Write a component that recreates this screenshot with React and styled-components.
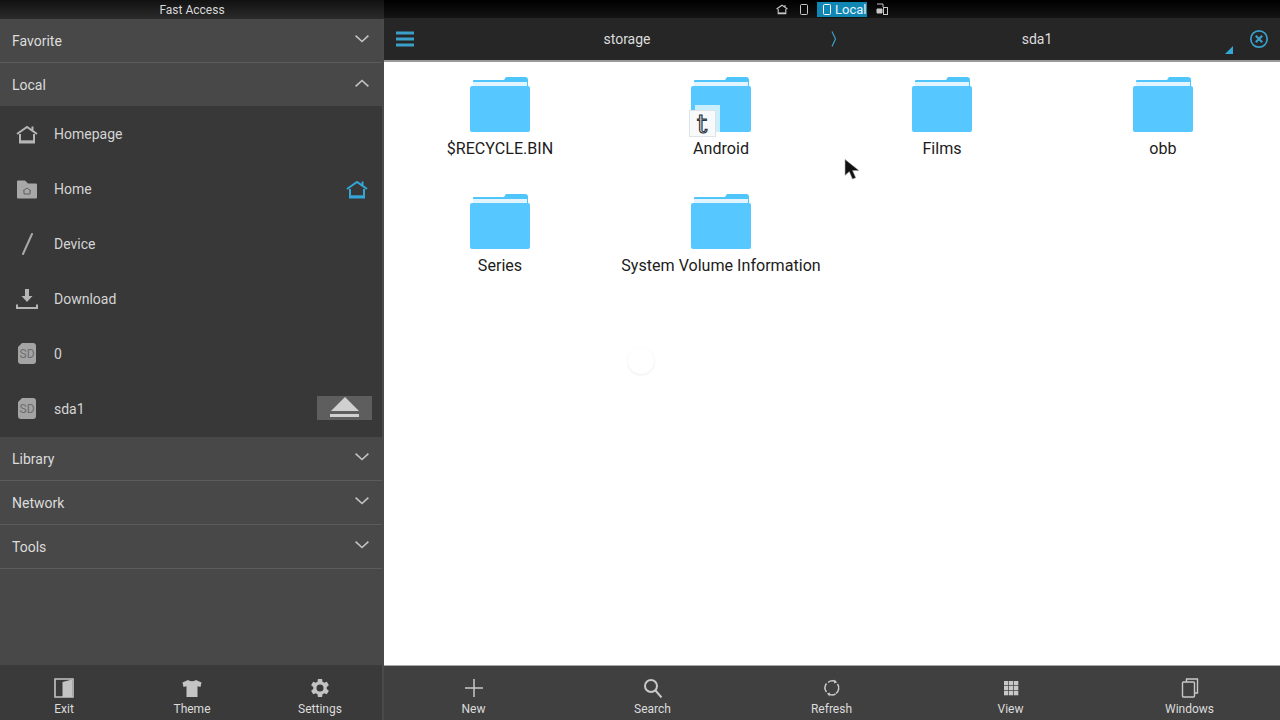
import React from 'react';
import styled, { createGlobalStyle } from 'styled-components';

const GlobalStyle = createGlobalStyle`
  html, body {
    margin: 0;
    padding: 0;
    background: #fff;
  }
  #root {
    width: 1280px;
    height: 720px;
    overflow: hidden;
  }
  * {
    box-sizing: border-box;
  }
`;

const HomeGlyph = ({ size = 22, color = '#b5b5b5' }) => (
  <svg width={size} height={size} viewBox="0 0 22 22" fill="none" stroke={color} strokeWidth="2">
    <path d="M1 11 11 4l5.500 3.800V3.500M21 11l-4.500-3.200" />
    <path d="M4 11v8.500h14V11" />
    <path d="M4 18.500h14" strokeWidth="2.400" />
  </svg>
);

const FolderHomeIcon = () => (
  <svg width="22" height="22" viewBox="0 0 22 22">
    <path d="M1 3.500q0-1 1-1h7l3 3h8q1 0 1 1v13q0 1-1 1H2q-1 0-1-1z" fill="#a8a8a8" />
    <path d="M7 13l4-3 4 3M8 12.500V16h6v-3.500" fill="none" stroke="#5f5f5f" strokeWidth="1" />
  </svg>
);

const SlashIcon = () => (
  <svg width="22" height="22" viewBox="0 0 22 22">
    <path d="M16 1 7 21" stroke="#a8a8a8" strokeWidth="2" strokeLinecap="round" />
  </svg>
);

const DownloadIcon = () => (
  <svg width="22" height="22" viewBox="0 0 22 22" fill="none">
    <path d="M9 1h4v7h3.500L11 14 5.500 8H9z" fill="#b5b5b5" />
    <path d="M1 16.500V20h20v-3.500" stroke="#b5b5b5" strokeWidth="2" />
  </svg>
);

const SdIcon = () => (
  <SdCard><span>SD</span></SdCard>
);

const ExitIcon = () => (
  <svg width="20" height="20" viewBox="0 0 20 20">
    <path d="M1 1h18v18H1z" fill="none" stroke="#c4c4c4" strokeWidth="1.600" />
    <path d="M8.500 4 18 1.500V19H8.500z" fill="#c4c4c4" />
  </svg>
);

const ShirtIcon = () => (
  <svg width="20" height="20" viewBox="0 0 20 20">
    <path d="M6 2q4 2.500 8 0l5.500 2.500-1 4.500-3-.7V19h-11V8.300l-3 .7-1-4.500z" fill="#c4c4c4" />
  </svg>
);

const GearIcon = () => (
  <svg width="20" height="20" viewBox="2.700 2 20 20">
    <path
      fillRule="evenodd"
      fill="#c4c4c4"
      d="M19.400 13a7.600 7.600 0 0 0 0-2l2.200-1.700-2.100-3.600-2.600 1a7.500 7.500 0 0 0-1.700-1L14.800 3h-4.200l-.4 2.700a7.500 7.500 0 0 0-1.700 1l-2.600-1-2.100 3.600L6 11a7.600 7.600 0 0 0 0 2l-2.200 1.700 2.100 3.600 2.600-1a7.500 7.500 0 0 0 1.700 1l.4 2.700h4.200l.4-2.700a7.500 7.500 0 0 0 1.700-1l2.600 1 2.100-3.600zM12.700 15.500a3.500 3.500 0 1 1 0-7 3.500 3.500 0 0 1 0 7z"
    />
  </svg>
);

const PlusIcon = () => (
  <svg width="20" height="20" viewBox="0 0 20 20">
    <path d="M10 1v18M1 10h18" stroke="#c8c8c8" strokeWidth="1.500" />
  </svg>
);

const SearchIcon = () => (
  <svg width="20" height="20" viewBox="0 0 20 20" fill="none" stroke="#c8c8c8" strokeWidth="2">
    <circle cx="8" cy="8" r="6" />
    <path d="m12.500 12.500 6 7" />
  </svg>
);

const RefreshIcon = () => (
  <svg width="20" height="20" viewBox="0 0 20 20" fill="none" stroke="#c8c8c8" strokeWidth="1.500">
    <path d="M6 4.500a7 7 0 0 1 8-.5M15.500 6a7 7 0 0 1-1.500 9.500M13.500 16a7 7 0 0 1-7.500-.5M4.500 14a7 7 0 0 1 0-8.500" />
    <path d="M12.500 1.500 15 4.500l-3 1M7.500 18.500 5 15.500l3-1" fill="#c8c8c8" stroke="none" />
  </svg>
);

const GridIcon = () => (
  <svg width="20" height="20" viewBox="0 0 20 20" fill="#c8c8c8">
    {[2, 7, 12].map((x) =>
      [2, 7, 12].map((y) => <rect key={`${x}-${y}`} x={x + 1} y={y + 1} width="4.300" height="4.300" />)
    )}
  </svg>
);

const WindowsIcon = () => (
  <svg width="20" height="20" viewBox="0 0 20 20" fill="none" stroke="#c8c8c8" strokeWidth="1.400">
    <path d="M6.500 4V1h11v14h-3" />
    <rect x="2.500" y="4" width="12" height="15" rx="1" />
  </svg>
);

const FolderIcon = () => (
  <svg width="60" height="55" viewBox="0 0 60 55">
    <path d="M3 9V4q0-1 1-1h30l2-3h19q3 0 3 3v6z" fill="#4fc6fb" />
    <path d="M3 5h54v4H3z" fill="#e2f5fe" />
    <path d="M0 11q0-2 2-2h56q2 0 2 2v42q0 2-2 2H2q-2 0-2-2z" fill="#56c8ff" />
  </svg>
);

const MenuIcon = () => (
  <svg width="18" height="16" viewBox="0 0 18 16" fill="#3a9fc9">
    <rect y="0.500" width="18" height="3" />
    <rect y="6.500" width="18" height="3" />
    <rect y="12.500" width="18" height="3" />
  </svg>
);

const CloseIcon = () => (
  <svg width="20" height="20" viewBox="0 0 20 20" fill="none" stroke="#3a9fc9">
    <circle cx="10" cy="10" r="8.200" strokeWidth="1.700" />
    <path d="m6.800 6.800 6.400 6.400m0-6.400-6.400 6.400" strokeWidth="2.200" />
  </svg>
);

const Chevron = ({ up }) => (
  <svg width="14" height="8" viewBox="0 0 14 8" fill="none" stroke="#c4c4c4" strokeWidth="1.600">
    <path d={up ? 'M.6 7.400 7 1.500l6.400 5.900' : 'M.6.6 7 6.500 13.400.6'} />
  </svg>
);

const Cursor = () => (
  <svg width="17" height="24" viewBox="0 0 16 22">
    <path d="M1 1v15l4-3.500 3 7 3-1.300-3-6.700h6z" fill="#111" stroke="#999" strokeWidth="0.500" />
  </svg>
);

const favoritesTop = [{ label: 'Favorite' }, { label: 'Local', open: true }];
const favoritesBottom = [{ label: 'Library' }, { label: 'Network' }, { label: 'Tools' }];

const localItems = [
  { label: 'Homepage', icon: <HomeGlyph /> },
  { label: 'Home', icon: <FolderHomeIcon />, extra: <HomeGlyph color="#33a7d8" /> },
  { label: 'Device', icon: <SlashIcon /> },
  { label: 'Download', icon: <DownloadIcon /> },
  { label: '0', icon: <SdIcon /> },
  { label: 'sda1', icon: <SdIcon />, eject: true },
];

const folders = ['$RECYCLE.BIN', 'Android', 'Films', 'obb', 'Series', 'System Volume Information'];

const sideActions = [
  { label: 'Exit', icon: <ExitIcon /> },
  { label: 'Theme', icon: <ShirtIcon /> },
  { label: 'Settings', icon: <GearIcon /> },
];

const mainActions = [
  { label: 'New', icon: <PlusIcon /> },
  { label: 'Search', icon: <SearchIcon /> },
  { label: 'Refresh', icon: <RefreshIcon /> },
  { label: 'View', icon: <GridIcon /> },
  { label: 'Windows', icon: <WindowsIcon /> },
];

const SectionRow = ({ label, open }) => (
  <Section>
    <span>{label}</span>
    <Chevron up={open} />
  </Section>
);

const App = () => (
  <Screen>
    <GlobalStyle />
    <Sidebar>
      <SideTitle>Fast Access</SideTitle>
      {favoritesTop.map((s) => (
        <SectionRow key={s.label} {...s} />
      ))}
      <LocalList>
        {localItems.map((item) => (
          <LocalItem key={item.label}>
            <ItemIcon>{item.icon}</ItemIcon>
            <ItemLabel>{item.label}</ItemLabel>
            {item.extra && <ItemExtra>{item.extra}</ItemExtra>}
            {item.eject && (
              <EjectButton>
                <EjectTriangle />
                <EjectBar />
              </EjectButton>
            )}
          </LocalItem>
        ))}
      </LocalList>
      {favoritesBottom.map((s) => (
        <SectionRow key={s.label} {...s} />
      ))}
      <SideFill />
      <ActionBar>
        {sideActions.map((a) => (
          <Action key={a.label}>
            {a.icon}
            <span>{a.label}</span>
          </Action>
        ))}
      </ActionBar>
    </Sidebar>
    <Main>
      <StatusBar>
        <StatusHome>
          <HomeGlyph size={12} color="#c8c8c8" />
        </StatusHome>
        <Phone />
        <LocalTab>
          <Phone $active />
          <span>Local</span>
        </LocalTab>
        <StatusIcon>
          <svg width="13" height="12" viewBox="0 0 13 12" fill="none" stroke="#c8c8c8">
            <path d="M1 1h6v3" />
            <path d="M1 6h5v4H1z" fill="#c8c8c8" />
            <rect x="7.500" y="4.500" width="4" height="7" />
          </svg>
        </StatusIcon>
      </StatusBar>
      <PathBar>
        <MenuButton>
          <MenuIcon />
        </MenuButton>
        <Crumb>storage</Crumb>
        <CrumbArrow>
          <svg width="6" height="16" viewBox="0 0 6 16" fill="none" stroke="#3a9fc9" strokeWidth="1.200">
            <path d="M1 .5 4.500 8 1 15.500" />
          </svg>
        </CrumbArrow>
        <Crumb $grow>
          sda1
          <CornerMark />
        </Crumb>
        <CloseButton>
          <CloseIcon />
        </CloseButton>
      </PathBar>
      <Files>
        <FileGrid>
          {folders.map((name) => (
            <FolderCell key={name}>
              <FolderThumb>
                <FolderIcon />
                {name === 'Android' && (
                  <>
                    <BadgeBack />
                    <Badge>t</Badge>
                  </>
                )}
              </FolderThumb>
              <FolderName>{name}</FolderName>
            </FolderCell>
          ))}
        </FileGrid>
        <Spinner />
        <CursorSpot>
          <Cursor />
        </CursorSpot>
      </Files>
      <MainActionBar>
        {mainActions.map((a) => (
          <MainAction key={a.label}>
            {a.icon}
            <span>{a.label}</span>
          </MainAction>
        ))}
      </MainActionBar>
    </Main>
  </Screen>
);

export default App;

const Screen = styled.div`
  width: 1280px;
  height: 720px;
  display: flex;
  font-family: Roboto, "Liberation Sans", sans-serif;
  overflow: hidden;
`;

const Sidebar = styled.div`
  position: relative;
  width: 384px;
  height: 720px;
  flex: none;
  display: flex;
  flex-direction: column;
  background: #484848;

  &::after {
    content: '';
    position: absolute;
    top: 19px;
    right: 0;
    bottom: 0;
    width: 2px;
    background: #4a4a4a;
  }
`;

const SideTitle = styled.div`
  height: 19px;
  flex: none;
  display: flex;
  align-items: center;
  justify-content: center;
  background: linear-gradient(#111, #2b2b2b);
  color: #d8d8d8;
  font-size: 12px;
`;

const Section = styled.div`
  height: 44px;
  flex: none;
  display: flex;
  align-items: center;
  justify-content: space-between;
  padding: 0 15px 0 12px;
  background: #484848;
  border-bottom: 1px solid #5c5c5c;
  color: #dcdcdc;
  font-size: 14px;

  span {
    padding-top: 1px;
  }
  svg {
    margin-top: -4px;
  }
`;

const LocalList = styled.div`
  height: 331px;
  flex: none;
  margin-top: -1px;
  background: #383838;
`;

const LocalItem = styled.div`
  height: 55px;
  display: flex;
  align-items: center;
  padding: 0 12px 0 16px;
`;

const ItemIcon = styled.div`
  width: 22px;
  height: 22px;
  flex: none;
  display: flex;
  align-items: center;
  justify-content: center;
`;

const ItemLabel = styled.span`
  margin-left: 16px;
  flex: 1;
  color: #d4d4d4;
  font-size: 14px;
`;

const ItemExtra = styled.div`
  display: flex;
  margin-right: 4px;
`;

const SdCard = styled.div`
  width: 18px;
  height: 21px;
  display: flex;
  align-items: center;
  justify-content: center;
  background: #a4a4a4;
  border-radius: 4px 3px 3px 3px;
  clip-path: polygon(4px 0, 100% 0, 100% 100%, 0 100%, 0 4px);

  span {
    color: #6e6e6e;
    font-size: 12px;
  }
`;

const EjectButton = styled.div`
  width: 55px;
  height: 24px;
  margin-top: -1px;
  display: flex;
  flex-direction: column;
  align-items: center;
  gap: 3px;
  padding-top: 1px;
  background: #5e5e5e;
`;

const EjectTriangle = styled.div`
  width: 0;
  height: 0;
  border-left: 14.500px solid transparent;
  border-right: 14.500px solid transparent;
  border-bottom: 14px solid #d0d0d0;
`;

const EjectBar = styled.div`
  width: 29px;
  height: 3px;
  background: #d0d0d0;
`;

const SideFill = styled.div`
  flex: 1;
`;

const ActionBar = styled.div`
  height: 55px;
  flex: none;
  display: grid;
  grid-template-columns: repeat(3, 1fr);
  background: #3a3a3a;
`;

const Action = styled.div`
  display: flex;
  flex-direction: column;
  align-items: center;
  padding-top: 13px;
  color: #dcdcdc;
  font-size: 12px;

  span {
    margin-top: 4px;
  }
`;

const MainAction = styled(Action)`
  padding-top: 12px;
`;

const Main = styled.div`
  flex: 1;
  display: flex;
  flex-direction: column;
  min-width: 0;
`;

const StatusBar = styled.div`
  height: 18px;
  flex: none;
  display: flex;
  align-items: center;
  padding-left: 392px;
  gap: 9px;
  background: linear-gradient(#000, #141414);
`;

const StatusIcon = styled.div`
  display: flex;
  align-items: center;
`;

const StatusHome = styled(StatusIcon)`
  margin-right: 3px;
`;

const Phone = styled.div`
  width: 8px;
  height: 11px;
  border: 1.500px solid ${({ $active }) => ($active ? '#fff' : '#c8c8c8')};
  border-radius: 1.500px;
`;

const LocalTab = styled.div`
  width: 50px;
  height: 15px;
  display: flex;
  align-items: center;
  gap: 4px;
  padding-left: 6px;
  background: #0f86b4;
  color: #e6f4fa;
  font-size: 13px;
  white-space: nowrap;
`;

const PathBar = styled.div`
  height: 44px;
  flex: none;
  display: flex;
  align-items: center;
  background: #262626;
  border-bottom: 2px solid #9a9a9a;
`;

const MenuButton = styled.div`
  width: 39px;
  flex: none;
  display: flex;
  padding-left: 12px;
`;

const Crumb = styled.div`
  position: relative;
  height: 100%;
  display: flex;
  align-items: center;
  justify-content: center;
  color: #dcdcdc;
  font-size: 14px;
  ${({ $grow }) => ($grow ? 'flex: 1;' : 'flex: none; width: 408px;')}
`;

const CrumbArrow = styled.div`
  width: 6px;
  flex: none;
  display: flex;
`;

const CornerMark = styled.div`
  position: absolute;
  right: 4px;
  bottom: 6px;
  width: 0;
  height: 0;
  border-left: 8px solid transparent;
  border-bottom: 8px solid #33a7d8;
`;

const CloseButton = styled.div`
  width: 43px;
  flex: none;
  display: flex;
  justify-content: center;
`;

const Files = styled.div`
  position: relative;
  flex: 1;
  background: #fff;
  min-height: 0;
`;

const FileGrid = styled.div`
  display: grid;
  grid-template-columns: repeat(4, 221px);
  grid-auto-rows: 117px;
  padding: 15px 0 0 5px;
`;

const FolderCell = styled.div`
  display: flex;
  flex-direction: column;
  align-items: center;
`;

const FolderThumb = styled.div`
  position: relative;
  width: 60px;
  height: 55px;
`;

const BadgeBack = styled.div`
  position: absolute;
  left: 4px;
  bottom: 0;
  width: 25px;
  height: 27px;
  background: #c9eefd;
`;

const Badge = styled.div`
  position: absolute;
  left: -2px;
  bottom: -5px;
  width: 27px;
  height: 27px;
  display: flex;
  align-items: center;
  justify-content: center;
  background: #f7f9fa;
  border: 1px solid #dde3e6;
  color: #eef1f3;
  font-family: "DejaVu Serif", "Liberation Serif", serif;
  font-size: 26px;
  line-height: 1;
  -webkit-text-stroke: 1.2px #2c3440;
`;

const FolderName = styled.div`
  margin: 7px 0 0 1px;
  color: #1c1c1c;
  font-size: 16.1px;
  line-height: 19px;
  white-space: nowrap;
`;

const Spinner = styled.div`
  position: absolute;
  left: 244px;
  top: 286px;
  width: 26px;
  height: 26px;
  border-radius: 50%;
  background: #fff;
  box-shadow: 0 1px 3px rgba(0, 0, 0, 0.08);
`;

const CursorSpot = styled.div`
  position: absolute;
  left: 460px;
  top: 96px;
`;

const MainActionBar = styled.div`
  height: 55px;
  flex: none;
  display: grid;
  grid-template-columns: repeat(5, 1fr);
  padding-right: 1px;
  background: #404040;
  border-top: 1px solid #a8a8a8;
`;
